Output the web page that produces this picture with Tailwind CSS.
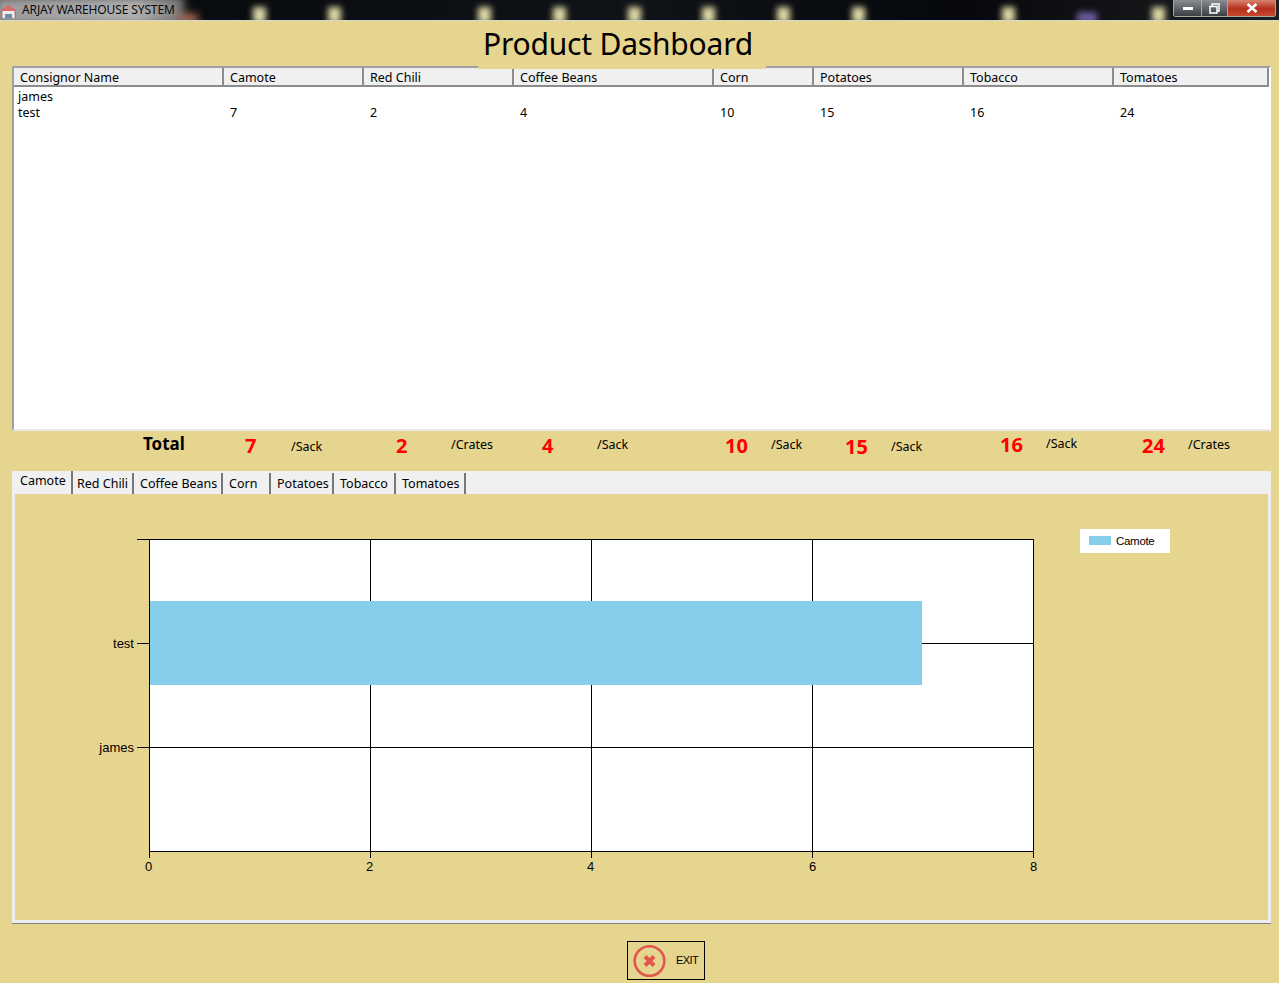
<!DOCTYPE html>
<html lang="en">
<head>
  <meta charset="UTF-8" />
  <title>ARJAY WAREHOUSE SYSTEM</title>
  <script src="https://cdn.jsdelivr.net/npm/@tailwindcss/browser@4"></script>
</head>
<body class="w-[1279px] h-[983px] overflow-hidden relative bg-[#e5d58f] text-black font-['Noto_Sans',sans-serif]">

  <!-- Title bar -->
  <header class="relative h-[21px] bg-[linear-gradient(90deg,#06080b,#101316_50%,#06080b_75%,#1c1e20)] border-b border-b-[#d8d8d0] overflow-hidden">
    <div class="absolute left-[-6px] top-[-4px] h-[30px] w-[190px] bg-[linear-gradient(90deg,#9a9a9a,#b0b0b0_75%,#777)] blur-[5px]"></div>
    <div class="absolute left-[178px] top-[14px] w-[20px] h-[10px] bg-[#b5705a] blur-[4px]"></div>
    <div class="absolute left-[253px] top-[7px] w-[13px] h-[16px] bg-[#dcd7a5] blur-[3px]"></div>
    <div class="absolute left-[328px] top-[7px] w-[13px] h-[16px] bg-[#dcd7a5] blur-[3px]"></div>
    <div class="absolute left-[478px] top-[7px] w-[13px] h-[16px] bg-[#dcd7a5] blur-[3px]"></div>
    <div class="absolute left-[553px] top-[7px] w-[13px] h-[16px] bg-[#dcd7a5] blur-[3px]"></div>
    <div class="absolute left-[628px] top-[7px] w-[13px] h-[16px] bg-[#dcd7a5] blur-[3px]"></div>
    <div class="absolute left-[702px] top-[7px] w-[13px] h-[16px] bg-[#dcd7a5] blur-[3px]"></div>
    <div class="absolute left-[777px] top-[7px] w-[13px] h-[16px] bg-[#dcd7a5] blur-[3px]"></div>
    <div class="absolute left-[852px] top-[7px] w-[13px] h-[16px] bg-[#dcd7a5] blur-[3px]"></div>
    <div class="absolute left-[1002px] top-[7px] w-[13px] h-[16px] bg-[#dcd7a5] blur-[3px]"></div>
    <div class="absolute left-[1077px] top-[12px] w-[20px] h-[12px] bg-[#6a5a9a] blur-[3px]"></div>
    <div class="absolute left-[1152px] top-[7px] w-[13px] h-[16px] bg-[#dcd7a5] blur-[3px]"></div>
    <div class="relative flex items-center h-[20px]">
      <svg class="ml-[1px] w-[15px] h-[15px] mt-[3px]" viewBox="0 0 15 15">
        <path d="M0 6 7.5 1 15 6V14H0Z" fill="#d96a6a"/>
        <path d="M1.5 7H13.5V14H1.5Z" fill="#e6ecef"/>
        <path d="M4 10H11V14H4Z" fill="#6d8ea3"/>
      </svg>
      <span class="ml-[6px] text-[12px] leading-[22px] text-[#0b0b0b] tracking-[-0.12px]">ARJAY WAREHOUSE SYSTEM</span>
    </div>
    <div class="absolute right-[3px] top-0 flex h-[17px] border border-t-0 border-[#a8a8a8] rounded-b-[3px] overflow-hidden">
      <div class="w-[28px] flex items-center justify-center bg-[linear-gradient(#8a8d92,#3b3d42)] border-r border-[#a8a8a8]">
        <div class="w-[10px] h-[3px] bg-white"></div>
      </div>
      <div class="w-[26px] flex items-center justify-center bg-[linear-gradient(#8a8d92,#3b3d42)] border-r border-[#a8a8a8]">
        <svg class="w-[11px] h-[11px]" viewBox="0 0 11 11" fill="none" stroke="#fff" stroke-width="1.5"><path d="M3 3V1H10V8H8"/><path d="M1 3.5H8V10H1Z"/></svg>
      </div>
      <div class="w-[47px] flex items-center justify-center bg-[linear-gradient(#d8836f,#b5301c_55%,#c84a30)]">
        <svg class="w-[12px] h-[10px]" viewBox="0 0 12 10" fill="none" stroke="#fff" stroke-width="2.6"><path d="M1.5 1 10.5 9M10.5 1 1.5 9"/></svg>
      </div>
    </div>
  </header>

  <!-- Page title, sits over the top of the table -->
  <div class="absolute left-[478px] top-[21px] w-[288px] h-[48px] bg-[#e5d58f] pl-[5px] text-[30px] tracking-[-0.2px] leading-[46px] whitespace-nowrap z-10">Product Dashboard</div>

  <!-- Table -->
  <section class="mt-[45px] mx-[12px] w-[1259px] h-[365px] bg-white border-2 border-t-[#a0a0a0] border-l-[#a0a0a0] border-r-white border-b-[#e8e8e8] text-[12.5px]">
    <div class="flex h-[19px] bg-[#f0f0f0] border-b-2 border-[#8c8c8c] w-[1255px] leading-[20px]">
      <div class="w-[210px] pl-[6px] border-r-2 border-[#8c8c8c]">Consignor Name</div>
      <div class="w-[140px] pl-[6px] border-r-2 border-[#8c8c8c]">Camote</div>
      <div class="w-[150px] pl-[6px] border-r-2 border-[#8c8c8c]">Red Chili</div>
      <div class="w-[200px] pl-[6px] border-r-2 border-[#8c8c8c]">Coffee Beans</div>
      <div class="w-[100px] pl-[6px] border-r-2 border-[#8c8c8c]">Corn</div>
      <div class="w-[150px] pl-[6px] border-r-2 border-[#8c8c8c]">Potatoes</div>
      <div class="w-[150px] pl-[6px] border-r-2 border-[#8c8c8c]">Tobacco</div>
      <div class="w-[155px] pl-[6px] border-r-2 border-[#8c8c8c]">Tomatoes</div>
    </div>
    <div class="pt-[2px] leading-[16px]">
      <div class="flex h-[16px]"><div class="w-[216px] pl-[4px]">james</div></div>
      <div class="flex h-[16px]">
        <div class="w-[216px] pl-[4px]">test</div>
        <div class="w-[140px]">7</div>
        <div class="w-[150px]">2</div>
        <div class="w-[200px]">4</div>
        <div class="w-[100px]">10</div>
        <div class="w-[150px]">15</div>
        <div class="w-[150px]">16</div>
        <div>24</div>
      </div>
    </div>
  </section>

  <!-- Totals -->
  <section class="flex items-start h-[40px] pl-[143px] text-[12.5px]">
    <span class="w-[102px] mt-[1px] text-[17px] leading-[24px] font-bold">Total</span>
    <span class="w-[46px] mt-[2px] text-[20px] leading-[26px] font-bold text-[#ff0000]">7</span>
    <span class="w-[105px] mt-[7px] leading-[18px]">/Sack</span>
    <span class="w-[55px] mt-[2px] text-[20px] leading-[26px] font-bold text-[#ff0000]">2</span>
    <span class="w-[91px] mt-[5px] leading-[18px]">/Crates</span>
    <span class="w-[55px] mt-[2px] text-[20px] leading-[26px] font-bold text-[#ff0000]">4</span>
    <span class="w-[128px] mt-[5px] leading-[18px]">/Sack</span>
    <span class="w-[46px] mt-[2px] text-[20px] leading-[26px] font-bold text-[#ff0000]">10</span>
    <span class="w-[74px] mt-[5px] leading-[18px]">/Sack</span>
    <span class="w-[46px] mt-[3px] text-[20px] leading-[26px] font-bold text-[#ff0000]">15</span>
    <span class="w-[109px] mt-[7px] leading-[18px]">/Sack</span>
    <span class="w-[46px] mt-[1px] text-[20px] leading-[26px] font-bold text-[#ff0000]">16</span>
    <span class="w-[96px] mt-[4px] leading-[18px]">/Sack</span>
    <span class="w-[46px] mt-[2px] text-[20px] leading-[26px] font-bold text-[#ff0000]">24</span>
    <span class="mt-[5px] leading-[18px]">/Crates</span>
  </section>

  <!-- Tabs -->
  <section class="mx-[12px] w-[1259px] text-[12.5px]">
    <div class="flex h-[23px] bg-[#f0f0f0] pl-[2px] items-end">
      <div class="w-[59px] h-[23px] pl-[6px] leading-[20px] border-r-2 border-[#777]">Camote</div>
      <div class="w-[61px] h-[21px] pl-[4px] leading-[22px] border-r-2 border-[#777]">Red Chili</div>
      <div class="w-[89px] h-[21px] pl-[6px] leading-[22px] border-r-2 border-[#777]">Coffee Beans</div>
      <div class="w-[48px] h-[21px] pl-[6px] leading-[22px] border-r-2 border-[#777]">Corn</div>
      <div class="w-[63px] h-[21px] pl-[6px] leading-[22px] border-r-2 border-[#777]">Potatoes</div>
      <div class="w-[62px] h-[21px] pl-[6px] leading-[22px] border-r-2 border-[#777]">Tobacco</div>
      <div class="w-[70px] h-[21px] pl-[6px] leading-[22px] border-r-2 border-[#777]">Tomatoes</div>
    </div>
    <div class="h-[429px] border-[3px] border-t-0 border-[#eeeeee] shadow-[0_1px_0_#808080]"></div>
  </section>

  <!-- Chart -->
  <svg class="absolute left-0 top-0 pointer-events-none" width="1279" height="983" viewBox="0 0 1279 983" font-family="'Liberation Sans',sans-serif" font-size="13" fill="#000" shape-rendering="crispEdges">
    <rect x="149.5" y="539.5" width="884" height="312" fill="#fff"/>
    <rect x="150" y="601" width="772" height="84" fill="#87ceeb"/>
    <g stroke="#000" fill="none">
      <path d="M149.5 539.5H1033.5V851.5H149.5Z"/>
      <path d="M370.5 539.5V601M370.5 685V851.5M591.5 539.5V601M591.5 685V851.5M812.5 539.5V601M812.5 685V851.5"/>
      <path d="M137 539.5H149.5M137 643.5H150M922 643.5H1033.5M137 747.5H1033.5"/>
      <path d="M149.5 851.5V858M370.5 851.5V858M591.5 851.5V858M812.5 851.5V858M1033.5 851.5V858"/>
    </g>
    <g shape-rendering="auto">
      <text x="134" y="648" text-anchor="end">test</text>
      <text x="134" y="752" text-anchor="end">james</text>
      <text x="148.5" y="871" text-anchor="middle">0</text>
      <text x="369.5" y="871" text-anchor="middle">2</text>
      <text x="590.5" y="871" text-anchor="middle">4</text>
      <text x="812.5" y="871" text-anchor="middle">6</text>
      <text x="1033.5" y="871" text-anchor="middle">8</text>
    </g>
    <rect x="1080" y="529" width="90" height="24" fill="#fff"/>
    <rect x="1089" y="536" width="22" height="9" fill="#87ceeb"/>
    <text x="1116" y="545" font-size="11.5" letter-spacing="-0.3" shape-rendering="auto">Camote</text>
  </svg>

  <!-- Exit -->
  <button class="absolute left-[627px] top-[941px] w-[78px] h-[39px] border border-black flex items-center">
    <svg class="ml-[4.5px] w-[34px] h-[34px]" viewBox="0 0 34 34" fill="none" stroke="#e2574c">
      <circle cx="16.5" cy="17" r="14.8" stroke-width="2.6"/>
      <path d="M12 12.5 21 21.5M21 12.5 12 21.5" stroke-width="4"/>
    </svg>
    <span class="ml-[9.5px] text-[11px] tracking-[-0.6px] font-['Liberation_Sans',sans-serif]">EXIT</span>
  </button>
</body>
</html>
